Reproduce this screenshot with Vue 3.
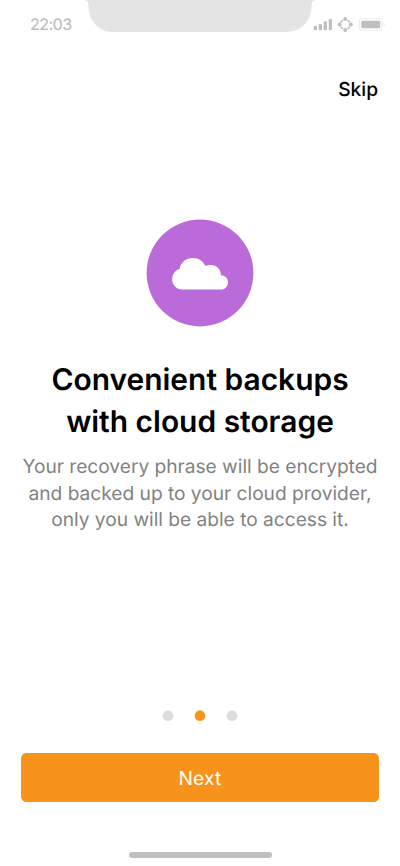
<script setup>
import { ref } from 'vue'

const current = ref(1)
const titleLines = ['Convenient backups', 'with cloud storage']
const textLines = [
  'Your recovery phrase will be encrypted',
  'and backed up to your cloud provider,',
  'only you will be able to access it.',
]
</script>

<template>
  <main class="screen">
    <header class="status">
      <span class="time">22:03</span>
      <svg class="notch" width="232" height="32" viewBox="0 0 232 32">
        <path d="M0 0H232C229 0 227.500 2 227.500 6C227.500 21 217 32 202 32H30C15 32 4.500 21 4.500 6C4.500 2 3 0 0 0Z" fill="#e4e4e4" />
      </svg>
      <svg class="indicators" width="72" height="18" viewBox="0 0 72 18">
        <g fill="#bfbfbf">
          <rect x="1.700" y="11" width="3.300" height="4.200" rx="1" />
          <rect x="6.700" y="9" width="3.300" height="6.200" rx="1" />
          <rect x="11.700" y="6.300" width="3.300" height="8.900" rx="1" />
          <rect x="16.700" y="3.900" width="3.300" height="11.300" rx="1" />
          <circle cx="33.200" cy="4" r="2" />
          <circle cx="27.600" cy="9.500" r="2" />
          <circle cx="38.800" cy="9.500" r="2" />
          <circle cx="33.200" cy="15" r="2" />
          <rect x="49.200" y="5.800" width="19" height="7.400" rx="1.500" />
        </g>
        <path d="M30.400 5.500L29 6.900M36 5.500L37.400 6.900M30.400 13.500L29 12.100M36 13.500L37.400 12.100" fill="none" stroke="#bfbfbf" stroke-width="1.600" stroke-linecap="round" />
        <rect x="47.500" y="3.800" width="22.400" height="11.400" rx="2.800" fill="none" stroke="#ececec" stroke-width="1.100" />
        <path d="M71.500 7.500C73.300 8.500 73.300 10.500 71.500 11.500Z" fill="#e8e8e8" />
      </svg>
    </header>

    <nav class="top">
      <button class="skip" type="button">Skip</button>
    </nav>

    <section class="content">
      <svg class="cloud" width="108" height="108" viewBox="0 0 108 108" aria-hidden="true">
        <circle cx="54" cy="54" r="53.400" fill="#bb6bd9" />
        <path d="M36 70.500C30.500 70.500 26.200 66 26.200 60.500C26.200 55.500 29 51.500 33.500 50.100C34.500 43.500 40 39 46.800 39C53 39 57.200 42 59.300 47C61 46.200 62.800 46 65 46C70.700 46 75 50.700 75 56.300C79 56.300 82 59.500 82 63.400C82 67.400 79 70.500 75 70.500Z" fill="#fff" />
      </svg>
      <h1 class="title"><span v-for="line in titleLines" :key="line">{{ line }}</span></h1>
      <p class="text"><span v-for="line in textLines" :key="line">{{ line }}</span></p>
    </section>

    <footer class="bottom">
      <svg class="dots" width="76" height="12" viewBox="0 0 76 12">
        <circle v-for="n in 3" :key="n" class="dot" :class="{ active: current === n - 1 }" :cx="n * 32 - 26" cy="5.700" r="5.330" />
      </svg>
      <button class="next" type="button">Next</button>
      <div class="home"></div>
    </footer>
  </main>
</template>

<style>
body {
  background: #fff;
}
</style>

<style scoped>
.screen {
  display: flex;
  flex-direction: column;
  width: 400px;
  height: 866px;
  overflow: hidden;
  background: #fff;
  font-family: Inter, sans-serif;
  text-rendering: geometricPrecision;
}
button {
  border: 0;
  padding: 0;
  background: none;
  font-family: inherit;
  text-rendering: inherit;
}
.status {
  display: flex;
  align-items: flex-start;
  height: 48px;
}
.time {
  width: 54px;
  padding: 14px 0 0 30px;
  color: #bfbfbf;
  font-size: 16px;
  font-weight: 500;
  line-height: 21px;
  letter-spacing: -0.650px;
}
.notch {
  flex: none;
}
.indicators {
  margin: 15px 0 0 -4px;
  flex: none;
  overflow: visible;
}
.top {
  display: flex;
  justify-content: flex-end;
  padding: 28px 22px 0;
}
.skip {
  color: #000;
  font-size: 19.200px;
  font-weight: 500;
  line-height: 26px;
}
.content {
  display: flex;
  flex-direction: column;
  align-items: center;
  margin-top: 117px;
}
.cloud {
  display: block;
}
.title,
.text {
  display: flex;
  flex-direction: column;
  align-items: center;
  white-space: nowrap;
}
.title {
  margin: 32px 0 0;
  color: #000;
  font-size: 29.950px;
  font-weight: 600;
  line-height: 42px;
}
.text {
  margin: 10.100px 0 0;
  color: #828282;
  font-size: 19.200px;
  font-weight: 400;
  letter-spacing: -0.030px;
  line-height: 26.670px;
}
.bottom {
  display: flex;
  flex-direction: column;
  align-items: center;
  margin-top: auto;
  padding-bottom: 8px;
}
.dots {
  display: block;
  margin-bottom: 31px;
}
.dot {
  fill: #dedede;
}
.dot.active {
  fill: #f7931a;
}
.next {
  width: 357.300px;
  height: 49px;
  border-radius: 5.300px;
  background: #f7931a;
  color: #fff;
  font-size: 19.200px;
  font-weight: 400;
  letter-spacing: 0.200px;
  line-height: 50px;
}
.home {
  width: 143px;
  height: 6px;
  margin-top: 50px;
  border-radius: 3px;
  background: #bfbfbf;
}
</style>
